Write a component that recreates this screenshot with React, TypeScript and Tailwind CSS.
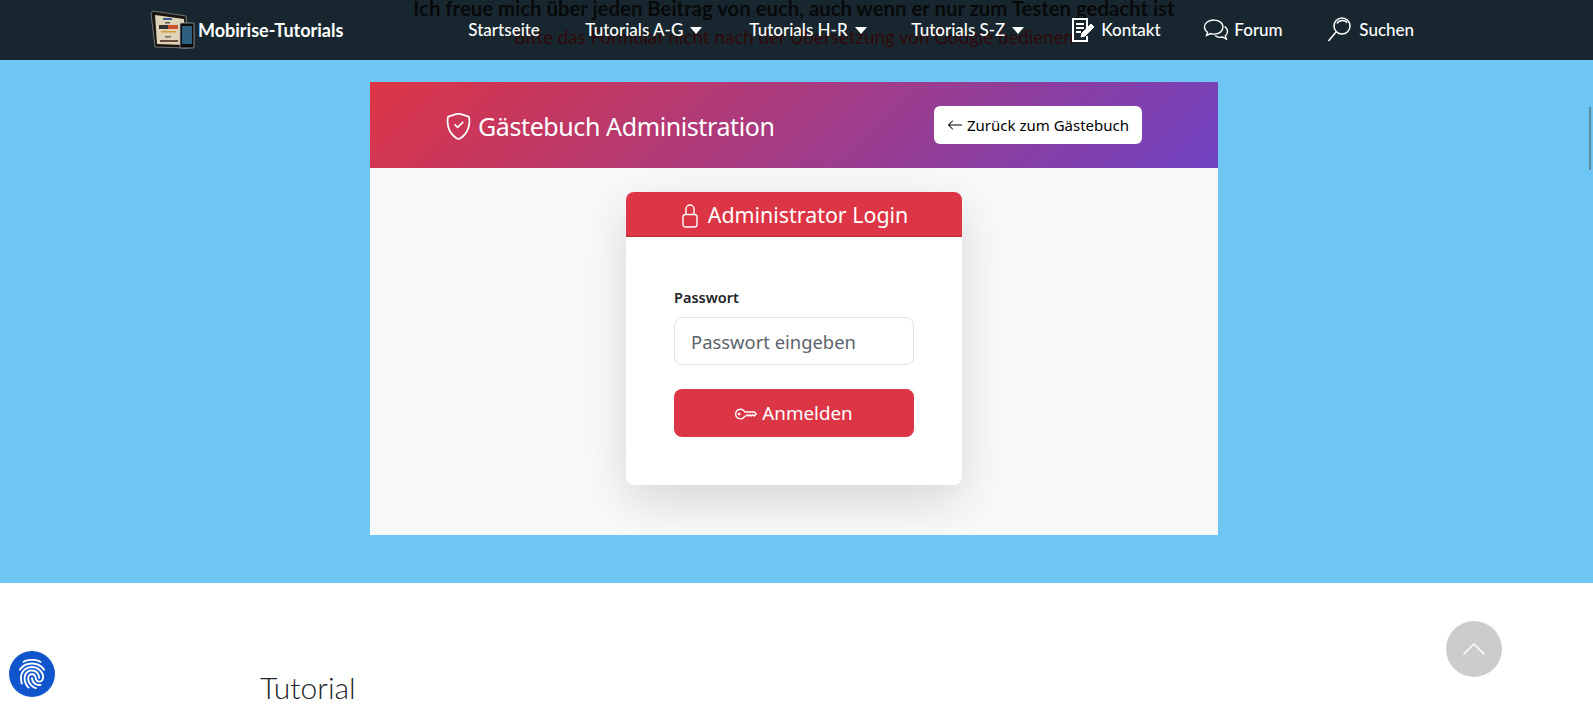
import { BsShieldCheck, BsKey, BsArrowLeft } from "react-icons/bs";
import { IoFingerPrint } from "react-icons/io5";

const navFont = { fontFamily: '"Lato", "Liberation Sans", sans-serif' };

function Caret() {
  return <span className="ml-[7px] inline-block h-0 w-0 border-x-[6.5px] border-t-[7px] border-x-transparent border-t-white" />;
}

function Logo() {
  return (
    <svg width="50" height="40" viewBox="0 0 50 40" className="shrink-0">
      <path d="M1 3 L3 1 L36 6 L38 38 L5 37 Z" fill="#1a1512" stroke="#8a8a8a" strokeWidth="0.8" />
      <path d="M5 5 L34 9 L35 35 L7 34 Z" fill="#dfd4b8" />
      <rect x="13" y="8" width="9" height="2" fill="#3a5a90" />
      <rect x="15" y="12" width="5" height="1.500" fill="#555" />
      <rect x="9" y="15" width="9" height="4" fill="#333" />
      <rect x="18" y="15" width="10" height="4" fill="#c9502c" />
      <rect x="11" y="21" width="15" height="1.500" fill="#d49a2a" />
      <rect x="15" y="26" width="6" height="1.500" fill="#666" />
      <rect x="10" y="30" width="18" height="2" fill="#6a4a3a" />
      <rect x="30" y="13" width="14" height="25" rx="1.500" fill="#0c0c0c" stroke="#aaa" strokeWidth="0.8" />
      <rect x="32" y="16" width="10" height="18" fill="#2c5f80" />
    </svg>
  );
}

function NoteIcon() {
  return (
    <svg width="24" height="26" viewBox="0 0 24 26" fill="none" stroke="white" strokeWidth="2" className="mr-[6px]">
      <path d="M16 19v5H2V2h14v9" />
      <path d="M5 7h8M5 11h8M5 15h5" />
      <path d="M10 20l1-4 9-9 3 3-9 9z" fill="white" strokeWidth="1" />
    </svg>
  );
}

function ChatIcon() {
  return (
    <svg width="26" height="24" viewBox="0 0 26 24" fill="none" stroke="white" strokeWidth="1.400" className="mr-[5px]">
      <path d="M11 2C5.500 2 1.500 5 1.500 9c0 2.200 1.200 4 3 5.300L3.500 17.500l4-1.900c1.100.3 2.300.5 3.500.5 5.500 0 9-3 9-7s-3.500-7-9-7z" />
      <path d="M21.500 8.500c2 1.200 3 3 3 5 0 1.700-.8 3.200-2.200 4.300l1 3.200-3.800-2c-2.500.7-5.500.2-7.500-1.500" />
    </svg>
  );
}

function SearchIcon() {
  return (
    <svg width="24" height="26" viewBox="0 0 24 26" fill="none" stroke="white" strokeWidth="1.500" className="mr-2">
      <circle cx="15" cy="9" r="8" />
      <path d="M10 6.500c1-2 3-3 5.500-3s4 1 4.500 2.500" />
      <path d="M9 15L1.500 24" />
    </svg>
  );
}

function LockIcon() {
  return (
    <svg width="16" height="24" viewBox="0 0 16 24" fill="none" stroke="white" strokeWidth="1.400">
      <rect x="1" y="10.500" width="14" height="12.500" rx="2.500" />
      <path d="M4 10.500V5a4 4 0 0 1 8 0v5.500" />
    </svg>
  );
}

function NavLink({ children, className = "" }: { children: React.ReactNode; className?: string }) {
  return <a className={`flex items-center text-[17px] font-medium text-white ${className}`}>{children}</a>;
}

export default function App() {
  return (
    <div className="relative h-[712px] w-full overflow-hidden bg-white" style={{ fontFamily: '"Noto Sans", "Open Sans", sans-serif' }}>
      {/* Navbar overlays the page content */}
      <nav className="absolute inset-x-0 top-0 z-10 flex h-[60px] items-center bg-[#090b0c]/85 pl-[150px]" style={navFont}>
        <Logo />
        <span className="ml-[-2px] text-[18px] font-bold text-white">Mobirise-Tutorials</span>
        <div className="ml-[125px] flex items-center">
          <NavLink className="w-[117px]">Startseite</NavLink>
          <NavLink className="w-[164px]">Tutorials A-G<Caret /></NavLink>
          <NavLink className="w-[162px]">Tutorials H-R<Caret /></NavLink>
          <NavLink className="w-[160px]">Tutorials S-Z<Caret /></NavLink>
          <NavLink className="w-[132px]"><NoteIcon />Kontakt</NavLink>
          <NavLink className="w-[124px]"><ChatIcon />Forum</NavLink>
          <NavLink><SearchIcon />Suchen</NavLink>
        </div>
      </nav>

      <main className="flex h-[583px] flex-col items-center overflow-hidden bg-[#6ec6f4] pr-[5px]">
        <p className="mt-[-4px] text-[20.35px] leading-[24px] font-bold text-black" style={navFont}>
          Ich freue mich über jeden Beitrag von euch, auch wenn er nur zum Testen gedacht ist
        </p>
        <p className="mt-[5px] text-[18.75px] leading-[24px] text-[#ff0000]" style={navFont}>
          Bitte das Formular nicht nach der Übersetzung von Google bedienen
        </p>

        <section className="mt-[33px] flex w-[848px] flex-col overflow-hidden bg-[#f8f9fa]">
          <header className="flex h-[86px] items-center justify-between bg-[linear-gradient(135deg,#dc3545,#6f42c1)] pr-[76px] pl-[75px]">
            <h1 className="flex items-center pt-[3px] text-[25px] font-normal tracking-[-0.4px] text-white">
              <BsShieldCheck className="mr-[6px] text-[27px]" />
              Gästebuch Administration
            </h1>
            <a className="flex h-[38px] w-[208px] items-center justify-center rounded-[6px] bg-white text-[15px] text-black">
              <BsArrowLeft className="mr-1 text-[16px]" />
              Zurück zum Gästebuch
            </a>
          </header>

          <div className="flex h-[367px] justify-center pt-6">
            <div className="flex h-[293px] w-[336px] flex-col overflow-hidden rounded-[8px] bg-white shadow-[0_16px_48px_rgba(0,0,0,0.14)]">
              <div className="flex h-[45px] items-center justify-center gap-[10px] border-b border-[#b92c3b] bg-[#dc3545] pt-[3px] pl-[2px] text-[21.4px] text-white">
                <LockIcon />
                Administrator Login
              </div>
              <form className="flex flex-col px-12 pt-[50px]">
                <label className="mb-[9px] text-[14.5px] leading-[21px] font-semibold text-[#212529]">Passwort</label>
                <input
                  type="password"
                  placeholder="Passwort eingeben"
                  className="h-[48px] rounded-[8px] border border-[#dee2e6] bg-white px-4 text-[18.4px] placeholder:text-[#5c636a]"
                />
                <button type="button" className="mt-6 flex h-[48px] items-center justify-center gap-[5px] rounded-[8px] bg-[#dc3545] pt-[1px] text-[18.8px] text-white">
                  <BsKey className="text-[22px]" />
                  Anmelden
                </button>
              </form>
            </div>
          </div>
        </section>
      </main>

      <div className="pt-[84px] pl-[260px]">
        <h2 className="text-[30px] leading-[40px] text-[#212529]" style={{ fontFamily: '"Lato", sans-serif', fontWeight: 300 }}>Tutorial</h2>
      </div>

      {/* Floating controls */}
      <span className="absolute top-[107px] right-[2px] h-[63px] w-[2px] bg-[#5d8aa3]" />
      <button className="absolute top-[621px] left-[1446px] flex h-[56px] w-[56px] items-center justify-center rounded-full bg-[#cccccc]">
        <svg width="24" height="14" viewBox="0 0 24 14" fill="none" stroke="white" strokeWidth="1.500"><path d="M1.500 12.500L12 2l10.500 10.500" /></svg>
      </button>
      <div className="absolute top-[651px] left-[9px] flex h-[46px] w-[46px] items-center justify-center rounded-full bg-[#1155cc]">
        <IoFingerPrint className="text-[32px] text-white" />
      </div>
    </div>
  );
}
